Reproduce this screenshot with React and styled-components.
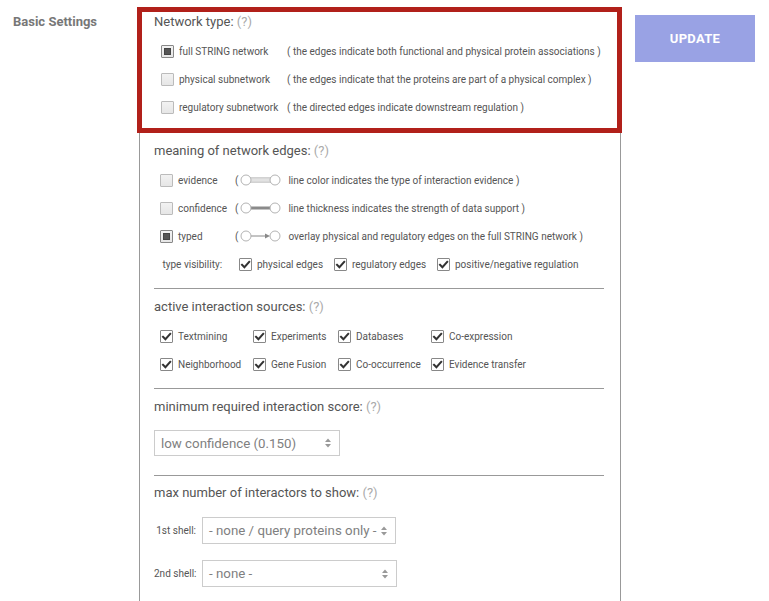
import React from "react";
import styled, { createGlobalStyle } from "styled-components";

const Global = createGlobalStyle`
  html, body { margin: 0; padding: 0; background: #fff; }
  body { font-family: Roboto, "Liberation Sans", Arial, sans-serif; }
`;

const Page = styled.div`
  display: flex;
  align-items: flex-start;
  width: 769px;
  height: 601px;
  overflow: hidden;
`;

const SideLabel = styled.div`
  width: 139px;
  box-sizing: border-box;
  padding: 14px 0 0 13px;
  font-size: 13px;
  font-weight: 700;
  color: #777;
  line-height: 16px;
`;

const Panel = styled.div`
  width: 482px;
  box-sizing: border-box;
  margin-top: 7px;
  min-height: 640px;
  border-left: 1px solid #999;
  border-right: 1px solid #999;
`;

const Highlight = styled.div`
  margin: 0 -2px 0 -3px;
  border: 5px solid #b1201a;
  padding: 0 0 7px 12px;
  background: #fff;
`;

const Section = styled.div`
  padding: ${(p) => p.$pt}px 16px ${(p) => p.$pb}px 14px;
`;

const Divider = styled.div`
  height: 1px;
  background: #999;
  margin: 0 16px 0 14px;
`;

const Heading = styled.div`
  font-size: 13px;
  line-height: 20px;
  color: #555;
  white-space: nowrap;
`;

const Help = styled.span`
  color: #aaa;
`;

const Rows = styled.div`
  margin-top: 5px;
  padding-left: ${(p) => p.$indent}px;
`;

const Row = styled.div`
  display: grid;
  grid-template-columns: ${(p) => p.$cols};
  align-items: center;
  height: 28px;
  font-size: 10px;
  color: #555;
  white-space: nowrap;
`;

const Check = styled.span`
  display: flex;
  align-items: center;
  gap: 5px;
`;

const Box = styled.span`
  width: 13px;
  height: 13px;
  box-sizing: border-box;
  flex: none;
  border: 1px solid ${(p) => (p.$kind === "empty" ? "#bbb" : "#888")};
  border-radius: 1px;
  background: ${(p) =>
    p.$kind === "tick" ? "#fff" : "linear-gradient(#f2f2f2, #e6e6e6)"};
  display: flex;
  align-items: center;
  justify-content: center;
`;

const Dot = styled.span`
  width: 7px;
  height: 7px;
  box-sizing: border-box;
  background: #555;
  border: 1px solid #444;
`;

const Desc = styled.span`
  display: flex;
  align-items: center;
`;

const Paren = styled.span`
  margin-right: 2px;
`;

const EdgeIcon = styled.svg`
  margin-right: 7px;
  flex: none;
`;

const Select = styled.div`
  display: flex;
  align-items: center;
  justify-content: space-between;
  gap: 4px;
  box-sizing: border-box;
  width: ${(p) => p.$w}px;
  height: ${(p) => p.$h}px;
  border: 1px solid #ccc;
  background: #fff;
  padding: 0 8px 0 6px;
  font-size: 13.3px;
  color: #808080;
  white-space: nowrap;
  overflow: hidden;
  & > svg { flex: none; }
`;

const SelectWrap = styled.div`
  margin-top: ${(p) => p.$mt}px;
`;

const ShellRow = styled.div`
  display: flex;
  align-items: center;
  margin-top: ${(p) => p.$mt}px;
`;

const ShellLabel = styled.span`
  width: 42px;
  margin-right: 6px;
  text-align: right;
  font-size: 10px;
  color: #555;
  white-space: nowrap;
`;

const UpdateButton = styled.button`
  margin: 15px 0 0 14px;
  width: 120px;
  height: 47px;
  border: none;
  background: #99a2e4;
  color: #fff;
  font-family: Roboto, "Liberation Sans", Arial, sans-serif;
  font-weight: 700;
  font-size: 13px;
  letter-spacing: 0.3px;
  padding: 0;
`;

const Tick = () => (
  <svg width="11" height="11" viewBox="0 0 11 11">
    <path d="M2 5.8 L4.4 8.2 L9.2 2.8" fill="none" stroke="#333" strokeWidth="2" strokeLinecap="square" />
  </svg>
);

const CB = ({ kind, children }) => (
  <Check>
    <Box $kind={kind}>
      {kind === "radio" && <Dot />}
      {kind === "tick" && <Tick />}
    </Box>
    {children}
  </Check>
);

const Arrows = () => (
  <svg width="6" height="10" viewBox="0 0 6 10">
    <path d="M0 4 L3 0.5 L6 4 Z" fill="#999" />
    <path d="M0 6 L3 9.5 L6 6 Z" fill="#999" />
  </svg>
);

const Edge = ({ type }) => (
  <EdgeIcon width="41" height="12" viewBox="0 0 41 12">
    {type === "evidence" && (
      <rect x="10" y="3.8" width="21" height="4.4" fill="#e2e2e2" stroke="#b8b8b8" strokeWidth="0.8" />
    )}
    {type === "confidence" && <rect x="10" y="4.5" width="21" height="3" fill="#8a8a8a" />}
    {type === "typed" && (
      <>
        <line x1="10" y1="6" x2="27" y2="6" stroke="#888" strokeWidth="1" />
        <path d="M25 3.5 L30 6 L25 8.5 Z" fill="#888" />
      </>
    )}
    <circle cx="6" cy="6" r="5" fill="#fff" stroke="#aaa" strokeWidth="0.9" />
    <circle cx="35" cy="6" r="5" fill="#fff" stroke="#aaa" strokeWidth="0.9" />
  </EdgeIcon>
);

const networkTypes = [
  ["radio", "full STRING network", "( the edges indicate both functional and physical protein associations )"],
  ["empty", "physical subnetwork", "( the edges indicate that the proteins are part of a physical complex )"],
  ["empty", "regulatory subnetwork", "( the directed edges indicate downstream regulation )"],
];

const edgeMeanings = [
  ["empty", "evidence", "evidence", "line color indicates the type of interaction evidence )"],
  ["empty", "confidence", "confidence", "line thickness indicates the strength of data support )"],
  ["radio", "typed", "typed", "overlay physical and regulatory edges on the full STRING network )"],
];

const sources = [
  ["Textmining", "Experiments", "Databases", "Co-expression"],
  ["Neighborhood", "Gene Fusion", "Co-occurrence", "Evidence transfer"],
];

export default function App() {
  return (
    <>
      <Global />
      <Page>
        <SideLabel>Basic Settings</SideLabel>
        <Panel>
          <Highlight>
            <Heading>
              Network type: <Help>(?)</Help>
            </Heading>
            <Rows $indent={7}>
              {networkTypes.map(([k, label, desc]) => (
                <Row key={label} $cols="126px auto">
                  <CB kind={k}>{label}</CB>
                  <span>{desc}</span>
                </Row>
              ))}
            </Rows>
          </Highlight>

          <Section $pt={8} $pb={10}>
            <Heading>
              meaning of network edges: <Help>(?)</Help>
            </Heading>
            <Rows $indent={6}>
              {edgeMeanings.map(([k, label, type, desc]) => (
                <Row key={label} $cols="75px auto">
                  <CB kind={k}>{label}</CB>
                  <Desc>
                    <Paren>(</Paren>
                    <Edge type={type} />
                    {desc}
                  </Desc>
                </Row>
              ))}
              <Row $cols="79px 95px 103px auto">
                <span>&nbsp;type visibility:</span>
                <CB kind="tick">physical edges</CB>
                <CB kind="tick">regulatory edges</CB>
                <CB kind="tick">positive/negative regulation</CB>
              </Row>
            </Rows>
          </Section>
          <Divider />

          <Section $pt={8} $pb={10}>
            <Heading>
              active interaction sources: <Help>(?)</Help>
            </Heading>
            <Rows $indent={6}>
              {sources.map((r) => (
                <Row key={r[0]} $cols="93px 85px 93px auto">
                  {r.map((s) => (
                    <CB key={s} kind="tick">
                      {s}
                    </CB>
                  ))}
                </Row>
              ))}
            </Rows>
          </Section>
          <Divider />

          <Section $pt={8} $pb={19}>
            <Heading>
              minimum required interaction score: <Help>(?)</Help>
            </Heading>
            <SelectWrap $mt={13}>
              <Select $w={186} $h={26}>
                <span>low confidence (0.150)</span>
                <Arrows />
              </Select>
            </SelectWrap>
          </Section>
          <Divider />

          <Section $pt={7} $pb={0}>
            <Heading>
              max number of interactors to show: <Help>(?)</Help>
            </Heading>
            <ShellRow $mt={14}>
              <ShellLabel>1st shell:</ShellLabel>
              <Select $w={194} $h={27}>
                <span>- none / query proteins only -</span>
                <Arrows />
              </Select>
            </ShellRow>
            <ShellRow $mt={16}>
              <ShellLabel>2nd shell:</ShellLabel>
              <Select $w={195} $h={27}>
                <span>- none -</span>
                <Arrows />
              </Select>
            </ShellRow>
          </Section>
        </Panel>
        <UpdateButton>UPDATE</UpdateButton>
      </Page>
    </>
  );
}
